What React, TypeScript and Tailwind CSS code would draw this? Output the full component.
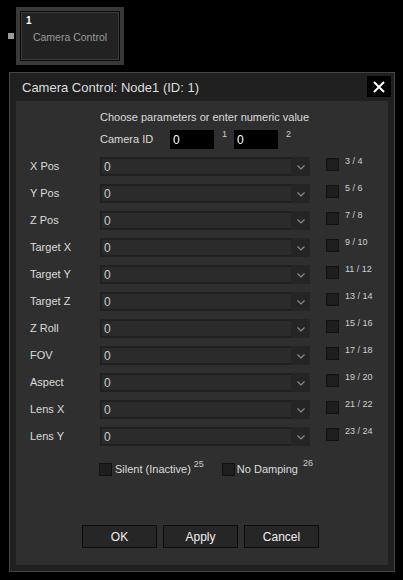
const ROWS = [
  { label: "X Pos", sup: "3 / 4" },
  { label: "Y Pos", sup: "5 / 6" },
  { label: "Z Pos", sup: "7 / 8" },
  { label: "Target X", sup: "9 / 10" },
  { label: "Target Y", sup: "11 / 12" },
  { label: "Target Z", sup: "13 / 14" },
  { label: "Z Roll", sup: "15 / 16" },
  { label: "FOV", sup: "17 / 18" },
  { label: "Aspect", sup: "19 / 20" },
  { label: "Lens X", sup: "21 / 22" },
  { label: "Lens Y", sup: "23 / 24" },
];

function Chevron() {
  return (
    <svg width="8" height="5" viewBox="0 0 8 5" fill="none">
      <polyline points="0.5,0.5 4,4 7.5,0.5" stroke="#8a8a8a" strokeWidth="1.2" />
    </svg>
  );
}

function Box() {
  return <div className="h-[13px] w-[13px] shrink-0 border border-[#111] bg-[#1e1e1e]" />;
}

function Dropdown() {
  return (
    <div className="flex h-[19px] w-[210px] bg-[#202020]">
      <div className="my-[2px] ml-[2px] flex flex-1 items-center bg-[#2b2b2b] pl-[2px] text-[12px] leading-none text-[#c4ccd4]">
        0
      </div>
      <div className="flex w-[19px] items-center justify-center bg-[#252525] pt-[1px]">
        <Chevron />
      </div>
    </div>
  );
}

function Button({ children }: { children: string }) {
  return (
    <button
      type="button"
      className="flex h-[23px] w-[75px] items-center justify-center border border-[#0c0c0c] bg-[#262626] text-[12px] text-[#f0f0f0]"
    >
      {children}
    </button>
  );
}

export default function App() {
  return (
    <div
      className="h-[580px] w-[403px] overflow-hidden bg-black text-[#dcdcdc]"
      style={{ fontFamily: '"Liberation Sans", Arial, sans-serif' }}
    >
      {/* node */}
      <div className="flex items-center pl-[8px] pt-[7px]">
        <div className="h-[6px] w-[6px] bg-[#9a9a9a]" />
        <div className="ml-[2px] h-[58px] w-[108px] bg-[#393939] p-[4px]">
          <div className="h-full w-full border border-[#0a0a0a] bg-[#222]">
            <div className="flex h-full flex-col border border-[#3a3a3a] px-[4px] pt-[3px]">
              <span className="text-[10px] font-bold leading-[10px] text-white">1</span>
              <span className="mt-[4px] text-center text-[10.5px] text-[#9a9a9a]">Camera Control</span>
            </div>
          </div>
        </div>
      </div>

      {/* window */}
      <div className="ml-[9px] mt-[7px] flex h-[500px] w-[386px] flex-col border border-[#454545] bg-[#202020]">
        <div className="flex h-[28px] items-start justify-between">
          <span className="pl-[12px] pt-[7px] text-[13px] leading-[15px] text-[#dedede]">
            Camera Control: Node1 (ID: 1)
          </span>
          <div className="mr-[3px] mt-[3px] flex h-[21px] w-[24px] items-center justify-center bg-black">
            <svg width="12" height="12" viewBox="0 0 12 12">
              <path d="M1 1L11 11M11 1L1 11" stroke="#fff" strokeWidth="2" />
            </svg>
          </div>
        </div>

        <div className="mx-[6px] mb-[6px] flex flex-1 flex-col bg-[#2f2f2f]">
          <div className="pl-[84px] pt-[10px] text-[11px] leading-[13px]">
            Choose parameters or enter numeric value
          </div>

          <div className="mt-[6px] flex items-start pl-[84px]">
            <span className="w-[70px] text-[11px] leading-[19px]">Camera ID</span>
            <div className="flex h-[19px] w-[44px] items-center bg-black pl-[3px] text-[12px] text-white">0</div>
            <span className="w-[20px] pl-[8px] text-[9px] leading-[9px] text-[#ccc]">1</span>
            <div className="flex h-[19px] w-[44px] items-center bg-black pl-[3px] text-[12px] text-white">0</div>
            <span className="pl-[8px] text-[9px] leading-[9px] text-[#ccc]">2</span>
          </div>

          <div className="mt-[8px] flex flex-col gap-[8px]">
            {ROWS.map((r) => (
              <div key={r.label} className="flex items-start">
                <span className="w-[84px] pl-[14px] text-[11px] leading-[19px]">{r.label}</span>
                <Dropdown />
                <div className="ml-[16px] mt-[1px]">
                  <Box />
                </div>
                <span className="ml-[6px] text-[9px] leading-[9px] text-[#cfcfcf]">{r.sup}</span>
              </div>
            ))}
          </div>

          <div className="mt-[17px] flex items-start pl-[83px]">
            <Box />
            <span className="ml-[3px] text-[11px] leading-[13px]">Silent (Inactive)</span>
            <span className="ml-[3px] -mt-[3px] text-[9px] leading-[9px] text-[#ccc]">25</span>
            <div className="ml-[18px]">
              <Box />
            </div>
            <span className="ml-[2px] text-[11px] leading-[13px]">No Damping</span>
            <span className="ml-[5px] -mt-[4px] text-[9px] leading-[9px] text-[#ccc]">26</span>
          </div>

          <div className="mt-[49px] flex gap-[6px] pl-[66px]">
            <Button>OK</Button>
            <Button>Apply</Button>
            <Button>Cancel</Button>
          </div>
        </div>
      </div>
    </div>
  );
}
